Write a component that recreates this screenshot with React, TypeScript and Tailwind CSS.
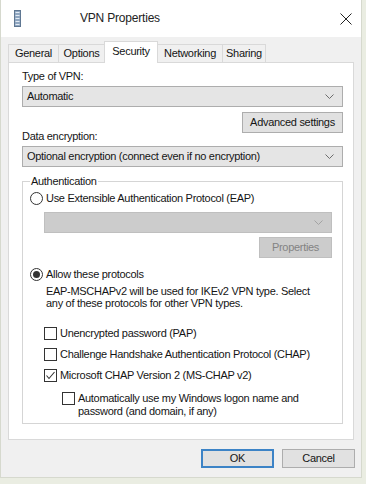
import React from 'react';

const font = { fontFamily: '"Liberation Sans", Arial, sans-serif' };

function Chevron({ color = '#6d6d6d' }: { color?: string }) {
  return (
    <svg width="9" height="5" viewBox="0 0 9 5" className="shrink-0">
      <path d="M0.5 0.5 L4.5 4.5 L8.5 0.5" fill="none" stroke={color} strokeWidth="1" />
    </svg>
  );
}

function Select({ value }: { value: string }) {
  return (
    <div className="flex h-[21px] items-center justify-between border border-[#adadad] bg-[#e5e5e5] pl-[4px] pr-[8px]">
      <span>{value}</span>
      <Chevron />
    </div>
  );
}

function Radio({ checked, label }: { checked?: boolean; label: string }) {
  return (
    <div className="flex h-[13px] items-center gap-[3px]">
      <span className="flex h-[13px] w-[13px] items-center justify-center rounded-full border border-[#333333] bg-white">
        {checked && <span className="h-[7px] w-[7px] rounded-full bg-[#333333]" />}
      </span>
      <span>{label}</span>
    </div>
  );
}

function Check({ checked, children }: { checked?: boolean; children: React.ReactNode }) {
  return (
    <div className="flex items-start gap-[3px] leading-[13px]">
      <span className="flex h-[13px] w-[13px] shrink-0 items-center justify-center border border-[#333333] bg-white">
        {checked && (
          <svg width="11" height="11" viewBox="0 0 11 11">
            <path d="M1.5 5.5 L4 8.5 L9.5 2" fill="none" stroke="#333" strokeWidth="1.1" />
          </svg>
        )}
      </span>
      <span>{children}</span>
    </div>
  );
}

const tabs = [
  { label: 'General', w: 'w-[51px]' },
  { label: 'Options', w: 'w-[47px]' },
  { label: 'Security', w: 'w-[54px]' },
  { label: 'Networking', w: 'w-[66px]' },
  { label: 'Sharing', w: 'w-[44px]' },
];

export default function App() {
  return (
    <div
      className="h-[484px] w-[366px] bg-[#eaede2] text-[11px] leading-[13px] tracking-[-0.3px] text-[#151515]"
      style={font}
    >
      <div className="flex h-[478px] w-[362px] flex-col border border-t-0 border-[#d6d9ce] bg-[#f0f0f0]">
        {/* title bar */}
        <div className="flex h-[37px] items-center bg-white">
          <svg width="7" height="17" viewBox="0 0 7 17" className="ml-[13px]">
            <rect x="0.5" y="0.5" width="6" height="16" fill="#8fa6c0" stroke="#5f7792" />
            <rect x="1.5" y="2" width="4" height="1" fill="#e3ebf4" />
            <rect x="1.5" y="5" width="4" height="1" fill="#e3ebf4" />
            <rect x="1.5" y="8" width="4" height="1" fill="#e3ebf4" />
            <rect x="1.5" y="11" width="4" height="1" fill="#e3ebf4" />
            <rect x="1.5" y="14" width="4" height="1" fill="#e3ebf4" />
          </svg>
          <span className="ml-[59px] text-[12px] tracking-[-0.2px] text-[#222]">VPN Properties</span>
          <svg width="12" height="12" viewBox="0 0 12 12" className="ml-auto mr-[9px]">
            <path d="M0.5 0.5 L11.5 11.5 M11.5 0.5 L0.5 11.5" stroke="#222" strokeWidth="1" />
          </svg>
        </div>

        {/* tabs */}
        <div className="mt-[4px] flex h-[21px] items-end px-[7px]">
          {tabs.map((t, i) =>
            t.label === 'Security' ? (
              <div
                key={t.label}
                className={`relative z-10 -mb-px -ml-px flex h-[22px] items-start justify-center border border-b-0 border-[#d9d9d9] bg-white pt-[3px] ${t.w}`}
              >
                {t.label}
              </div>
            ) : (
              <div
                key={t.label}
                className={`flex h-[18px] items-center justify-center border border-b-0 border-[#d9d9d9] bg-[#f0f0f0] ${i === 0 ? '' : '-ml-px'} ${t.w}`}
              >
                {t.label}
              </div>
            )
          )}
        </div>

        {/* panel */}
        <div className="mx-[7px] flex h-[378px] flex-col border border-[#d9d9d9] bg-white pl-[13px] pr-[10px]">
          <div className="mt-[7px]">Type of VPN:</div>
          <div className="mt-[3px]">
            <Select value="Automatic" />
          </div>
          <div className="mt-[5px] flex justify-end">
            <div className="flex h-[21px] w-[101px] items-center justify-center border border-[#adadad] bg-[#e1e1e1]">
              Advanced settings
            </div>
          </div>
          <div className="-mt-[3px]">Data encryption:</div>
          <div className="mt-[3px]">
            <Select value="Optional encryption (connect even if no encryption)" />
          </div>

          <fieldset className="mt-[8px] h-[249px] border border-[#d5d5d5] pl-[7px] pr-[10px]">
            <legend className="px-[1px]">Authentication</legend>
            <div className="mt-[4px]">
              <Radio label="Use Extensible Authentication Protocol (EAP)" />
            </div>
            <div className="ml-[14px] mt-[7px] flex h-[21px] items-center justify-end border border-[#bfbfbf] bg-[#cccccc] pr-[8px]">
              <Chevron color="#a3a3a3" />
            </div>
            <div className="mt-[4px] flex justify-end">
              <div className="flex h-[21px] w-[73px] items-center justify-center border border-[#bfbfbf] bg-[#cccccc] text-[#838383]">
                Properties
              </div>
            </div>
            <div className="mt-[10px]">
              <Radio checked label="Allow these protocols" />
            </div>
            <div className="ml-[16px] mt-[4px] leading-[12px]">
              EAP-MSCHAPv2 will be used for IKEv2 VPN type. Select
              <br />
              any of these protocols for other VPN types.
            </div>
            <div className="ml-[14px] mt-[18px] flex flex-col gap-[8px]">
              <Check>Unencrypted password (PAP)</Check>
              <Check>Challenge Handshake Authentication Protocol (CHAP)</Check>
              <Check checked>Microsoft CHAP Version 2 (MS-CHAP v2)</Check>
              <div className="ml-[18px] mt-[2px]">
                <Check>
                  Automatically use my Windows logon name and
                  <br />
                  password (and domain, if any)
                </Check>
              </div>
            </div>
          </fieldset>
        </div>

        {/* buttons */}
        <div className="mt-[9px] flex justify-end gap-[8px] pr-[6px]">
          <div className="flex h-[19px] w-[73px] items-center justify-center border-2 border-[#3c83c6] bg-[#e1e1e1]">
            OK
          </div>
          <div className="flex h-[19px] w-[73px] items-center justify-center border border-[#adadad] bg-[#e1e1e1]">
            Cancel
          </div>
        </div>
      </div>
    </div>
  );
}
